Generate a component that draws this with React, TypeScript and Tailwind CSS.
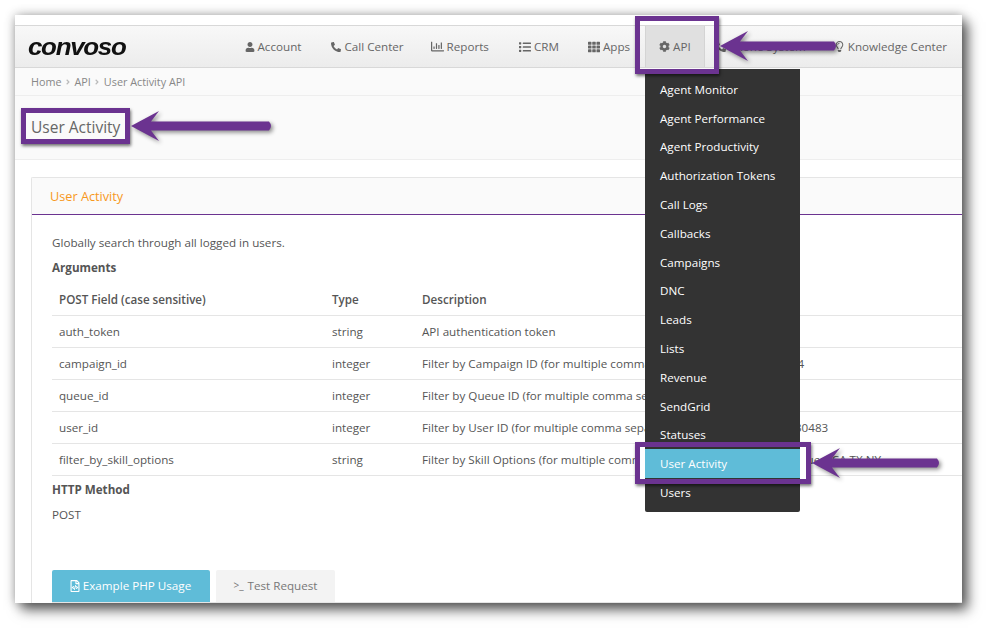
import { FaUser, FaPhone, FaList, FaTh, FaCog, FaRegLightbulb, FaRegFileCode, FaAngleRight, FaRegChartBar } from "react-icons/fa";
import type { ReactNode } from "react";

const navItems: { label: string; icon: ReactNode; cls?: string }[] = [
  { label: "Account", icon: <FaUser size={10} />, cls: "mr-[2px]" },
  { label: "Call Center", icon: <FaPhone size={10} className="-scale-x-100" />, cls: "-mr-[1px]" },
  { label: "Reports", icon: <FaRegChartBar size={13} />, cls: "mr-[2px]" },
  { label: "CRM", icon: <FaList size={12} />, cls: "mr-[1px]" },
  { label: "Apps", icon: <FaTh size={12} />, cls: "mr-[1px]" },
  { label: "API", icon: <FaCog size={11} />, cls: "bg-[#e0e0e0] border-x border-[#d4d4d4] !px-[13px]" },
  { label: "Phone System", icon: <FaPhone size={10} className="-scale-x-100" />, cls: "-ml-[3px]" },
  { label: "Knowledge Center", icon: <FaRegLightbulb size={11} /> },
];

const menuItems = [
  "Agent Monitor",
  "Agent Performance",
  "Agent Productivity",
  "Authorization Tokens",
  "Call Logs",
  "Callbacks",
  "Campaigns",
  "DNC",
  "Leads",
  "Lists",
  "Revenue",
  "SendGrid",
  "Statuses",
  "User Activity",
  "Users",
];

const rows = [
  ["auth_token", "string", "API authentication token"],
  ["campaign_id", "integer", "Filter by Campaign ID (for multiple comma separated values) e.g.: 1234"],
  ["queue_id", "integer", "Filter by Queue ID (for multiple comma separated values)"],
  ["user_id", "integer", "Filter by User ID (for multiple comma separated values) e.g. 30482,1030483"],
  ["filter_by_skill_options", "string", "Filter by Skill Options (for multiple comma separated values) e.g. for values: CA,TX,NY"],
];

const Arrow = ({ className, width }: { className: string; width: number }) => (
  <svg
    className={`absolute drop-shadow-[2px_2px_2px_rgba(0,0,0,0.45)] ${className}`}
    width={width}
    height={32}
    viewBox={`0 0 ${width} 32`}
  >
    <path
      d={`M1 16 L29 1 L21 11.5 L${width - 5} 11.5 Q${width - 1} 16 ${width - 5} 20.5 L21 20.5 L29 31 Z`}
      fill="#6b3390"
    />
  </svg>
);

const Box = ({ className }: { className: string }) => (
  <div className={`absolute border-[5px] border-[#6b3390] shadow-[1px_2px_3px_rgba(0,0,0,0.55)] ${className}`} />
);

export default function App() {
  return (
    <div className="relative w-[987px] h-[629px] overflow-hidden bg-white pt-[15px] pl-[15px] font-['Open_Sans',sans-serif] text-[11.65px] leading-[17px] text-[#555]">
      <div className="flex flex-col w-[947px] h-[588px] overflow-hidden bg-white shadow-[0_0_10px_rgba(0,0,0,0.3),6px_7px_12px_rgba(0,0,0,0.6)]">
        <div className="h-[10px] shrink-0 bg-white" />

        {/* nav */}
        <div className="flex h-[43px] shrink-0 items-center justify-between border-y border-[#d8d8d8] bg-gradient-to-b from-[#f8f8f8] to-[#ececec]">
          <span className="ml-[13px] inline-block origin-left scale-x-[1.08] font-['Liberation_Sans',sans-serif] text-[24px] font-bold italic leading-none tracking-[-1.2px] text-[#111]">
            convoso
          </span>
          <div className="flex h-full items-center pr-[1px]">
            {navItems.map((item) => (
              <div key={item.label} className={`flex h-full items-center gap-[3px] px-[14px] text-[#666] ${item.cls ?? ""}`}>
                {item.icon}
                {item.label}
              </div>
            ))}
          </div>
        </div>

        {/* breadcrumb */}
        <div className="flex h-[28px] shrink-0 items-center gap-[2.5px] border-b border-[#eeeeee] bg-[#fafafa] pl-[16px] text-[10.8px] text-[#888]">
          Home
          <FaAngleRight size={8} className="text-[#bbb]" />
          API
          <FaAngleRight size={8} className="text-[#bbb]" />
          User Activity API
        </div>

        {/* title */}
        <div className="flex h-[64px] shrink-0 items-center border-b border-[#eeeeee] bg-[#fafafa] pl-[16px]">
          <h1 className="-mt-[2px] text-[15.5px] leading-[22px] text-[#666]">User Activity</h1>
        </div>

        {/* panel */}
        <div className="pl-[16px] pt-[17px]">
          <div className="w-[1000px] rounded-tl-[2px] border-l border-t border-[#e5e5e5]">
            <div className="flex h-[37px] items-center border-b border-[#6b3390] bg-[#fafafa] pl-[18px] text-[12.7px] text-[#f7981d]">
              User Activity
            </div>
            <div className="pl-[20px] pt-[19px]">
              <p>Globally search through all logged in users.</p>
              <p className="mt-[8px] font-bold">Arguments</p>
              <table className="mt-[7px] w-[980px] table-fixed border-collapse border-b border-[#e5e5e5]">
                <thead>
                  <tr className="h-[32px] text-left">
                    <th className="w-[273px] pl-[7px] pt-[1px] font-semibold">POST Field (case sensitive)</th>
                    <th className="w-[90px] pl-[7px] pt-[1px] font-semibold">Type</th>
                    <th className="pl-[7px] pt-[1px] font-semibold">Description</th>
                  </tr>
                </thead>
                <tbody>
                  {rows.map((row) => (
                    <tr key={row[0]} className="h-[32px] border-t border-[#e5e5e5]">
                      {row.map((cell) => (
                        <td key={cell} className="pl-[7px] pt-[1px] whitespace-nowrap">
                          {cell}
                        </td>
                      ))}
                    </tr>
                  ))}
                </tbody>
              </table>
              <p className="mt-[5px] font-bold">HTTP Method</p>
              <p className="mt-[8px]">POST</p>
              <div className="mt-[47px] flex items-start gap-[6px] border-b border-[#e5e5e5]">
                <div className="flex h-[32px] w-[158px] items-center justify-center gap-[2px] rounded-t-[2px] bg-[#5fbcd8] pr-[2px] text-white">
                  <FaRegFileCode size={12} />
                  Example PHP Usage
                </div>
                <div className="flex h-[32px] w-[119px] items-center justify-center gap-[4px] rounded-t-[2px] bg-[#f3f3f3] text-[#777]">
                  <span className="text-[10px]">&gt;_</span>
                  Test Request
                </div>
              </div>
            </div>
          </div>
        </div>
      </div>

      {/* dropdown opened from API */}
      <div className="absolute left-[645px] top-[69px] z-10 w-[155px] rounded-b-[2px] bg-[#333333] pb-[5px] pt-[6px] font-medium text-white">
        {menuItems.map((item) => (
          <div
            key={item}
            className={`flex h-[28.8px] items-center pl-[15px] ${
              item === "User Activity" ? "bg-[#5fbcd8] shadow-[-5px_0_0_#fff,6px_0_0_#fff]" : ""
            }`}
          >
            {item}
          </div>
        ))}
      </div>

      {/* purple annotations */}
      <div className="absolute inset-0 z-20">
        <Box className="left-[635px] top-[16px] h-[58px] w-[84px]" />
        <Box className="left-[21px] top-[108px] h-[36px] w-[109px]" />
        <Box className="left-[635px] top-[442px] h-[42px] w-[176px]" />
        <Arrow className="left-[719px] top-[30px]" width={120} />
        <Arrow className="left-[130px] top-[110px]" width={144} />
        <Arrow className="left-[811px] top-[447px]" width={131} />
      </div>
    </div>
  );
}
